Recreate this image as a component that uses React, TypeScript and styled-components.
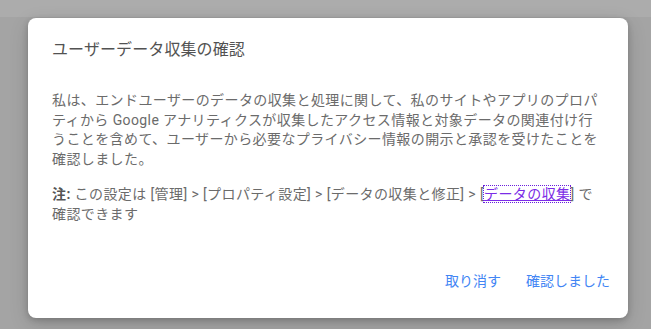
import { createGlobalStyle, styled } from "styled-components";

const GlobalStyle = createGlobalStyle`
	html, body {
		margin: 0;
		padding: 0;
	}
	body {
		font-family: Roboto, "Noto Sans CJK JP", sans-serif;
		background: linear-gradient(#acacac 0 17px, #a4a4a4 17px);
		min-height: 329px;
	}
`;

const Page = styled.div`
	display: flex;
	flex-direction: column;
	align-items: flex-start;
	padding: 18px 0 0 28px;
`;

const Dialog = styled.div`
	display: flex;
	flex-direction: column;
	box-sizing: border-box;
	width: 600px;
	height: 300px;
	padding: 22px 24px 8px 24px;
	background-color: white;
	border-radius: 8px;
	box-shadow: 0 2px 6px rgba(0, 0, 0, 0.2), 0 6px 20px rgba(0, 0, 0, 0.14);
`;

const Title = styled.h2`
	margin: 0;
	font-size: 16px;
	font-weight: 400;
	line-height: 20px;
	letter-spacing: 0.1px;
	color: #525252;
`;

const Content = styled.div`
	margin-top: 31px;
	font-size: 14px;
	line-height: 19.5px;
	letter-spacing: 0.4px;
	color: #6b6b6b;

	p {
		margin: 0 0 16px 0;
	}
`;

const Strong = styled.b`
	font-weight: 700;
	color: #555555;
`;

const FocusLink = styled.a`
	color: #7b2ce6;
	text-decoration: underline;
	outline: 1px dotted #6a1fdc;
	outline-offset: 0;
`;

const Actions = styled.div`
	display: flex;
	justify-content: flex-end;
	gap: 9px;
	margin: auto -14px 0 0;
	padding-bottom: 12px;
`;

const TextButton = styled.button`
	height: 36px;
	padding: 0 8px;
	border: none;
	background: transparent;
	font-family: Roboto, "Noto Sans CJK JP", sans-serif;
	font-size: 14px;
	color: #4285f4;
	cursor: pointer;
`;

const App = () => {
	return (
		<>
			<GlobalStyle />
			<Page>
				<Dialog>
					<Title>ユーザーデータ収集の確認</Title>
					<Content>
						<p>
							私は、エンドユーザーのデータの収集と処理に関して、私のサイトやアプリのプロパティから Google
							アナリティクスが収集したアクセス情報と対象データの関連付け行うことを含めて、ユーザーから必要なプライバシー情報の開示と承認を受けたことを確認しました。
						</p>
						<p>
							<Strong>注:</Strong> この設定は [管理] &gt; [プロパティ設定] &gt; [データの収集と修正] &gt; [
							<FocusLink href="#">データの収集</FocusLink>] で確認できます
						</p>
					</Content>
					<Actions>
						<TextButton>取り消す</TextButton>
						<TextButton>確認しました</TextButton>
					</Actions>
				</Dialog>
			</Page>
		</>
	);
};

export default App;
